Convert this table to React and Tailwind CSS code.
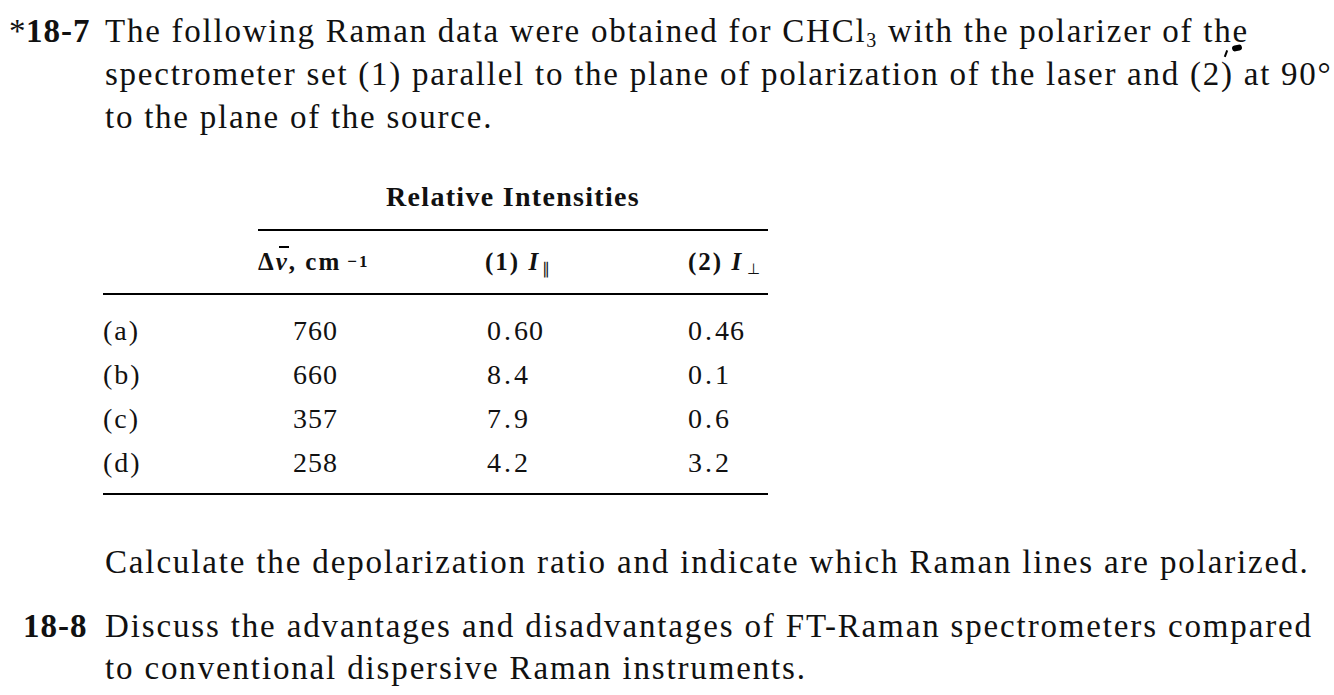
import React from "react";

const serif = { fontFamily: '"Liberation Serif", "Times New Roman", serif' };

function Nu() {
  return (
    <span className="relative inline-block italic">
      ν
      <span className="absolute left-[3px] right-0 top-[3px] h-[2px] bg-black" />
    </span>
  );
}

function Num({ v }) {
  const parts = v.split(".");
  if (parts.length === 1) return <span>{v}</span>;
  return (
    <span>
      {parts[0]}
      <span className="px-[2px]">.</span>
      {parts[1]}
    </span>
  );
}

export default function App() {
  const rows = [
    ["(a)", "760", "0.60", "0.46"],
    ["(b)", "660", "8.4", "0.1"],
    ["(c)", "357", "7.9", "0.6"],
    ["(d)", "258", "4.2", "3.2"],
  ];
  const cols = "grid grid-cols-[155px_227px_203px_80px]";
  return (
    <div
      className="relative w-[1334px] h-[695px] bg-white text-[#111] overflow-hidden pt-[10px]"
      style={serif}
    >
      <div className="text-[33px] leading-[43px] tracking-[1.75px]">
        <div className="flex">
          <div className="w-[105px] shrink-0 pl-[9px] whitespace-nowrap tracking-[0.5px]">
            *<span className="font-bold tracking-[1px]">18-7</span>
          </div>
          <div className="whitespace-nowrap">
            <div>
              The following Raman data were obtained for CHCl<sub className="text-[20px]">3</sub> with the polarizer of the
            </div>
            <div>
              spectrometer set (1) parallel to the plane of polarization of the laser and (2) at 90°
            </div>
            <div>to the plane of the source.</div>
          </div>
        </div>
      </div>
      <span className="absolute left-[1232px] top-[45px] w-[10px] h-[6px] rounded-full bg-black -rotate-12" />
      <span className="absolute left-[1225px] top-[50px] w-[1.5px] h-[7px] bg-black rotate-[20deg]" />

      <div className="ml-[103px] w-[665px] mt-[38px]">
        <div className={cols}>
          <div />
          <div className="col-span-3 text-center font-bold text-[28px] tracking-[1.3px] leading-[40px]">
            Relative Intensities
          </div>
        </div>
        <div className={`${cols} mt-[12px]`}>
          <div />
          <div className="col-span-3 h-[2px] bg-black" />
        </div>
        <div className={`${cols} font-bold text-[25px] tracking-[2px] h-[62px] items-center`}>
          <div />
          <div className="whitespace-nowrap">
            Δ<Nu />, cm<sup className="text-[17px] relative -top-[3px] ml-[6px]">−1</sup>
          </div>
          <div className="whitespace-nowrap">
            (1) <span className="italic">I</span>
            <sub className="text-[16px] font-normal ml-[2px]">∥</sub>
          </div>
          <div className="whitespace-nowrap">
            (2) <span className="italic">I</span>
            <sub className="text-[15px] font-normal ml-[4px]">⊥</sub>
          </div>
        </div>
        <div className="h-[2px] bg-black" />
        <div className="pt-[14px] pb-[8px]">
          {rows.map((r) => (
            <div key={r[0]} className={`${cols} text-[28px] leading-[44px] tracking-[1px]`}>
              <div className="tracking-[2px]">{r[0]}</div>
              <div className="pl-[35px]">
                <Num v={r[1]} />
              </div>
              <div className="pl-[2px]">
                <Num v={r[2]} />
              </div>
              <div>
                <Num v={r[3]} />
              </div>
            </div>
          ))}
        </div>
        <div className="h-[2px] bg-black" />
      </div>

      <div className="text-[33px] leading-[43px] tracking-[1.85px] mt-[46px]">
        <div className="pl-[105px] whitespace-nowrap">
          Calculate the depolarization ratio and indicate which Raman lines are polarized.
        </div>
        <div className="flex mt-[21px]">
          <div className="w-[105px] shrink-0 pl-[23px] font-bold tracking-[1px]">18-8</div>
          <div className="whitespace-nowrap">
            <div>
              Discuss the advantages and disadvantages of FT-Raman spectrometers compared
            </div>
            <div className="-mt-[1px]">to conventional dispersive Raman instruments.</div>
          </div>
        </div>
      </div>
    </div>
  );
}
